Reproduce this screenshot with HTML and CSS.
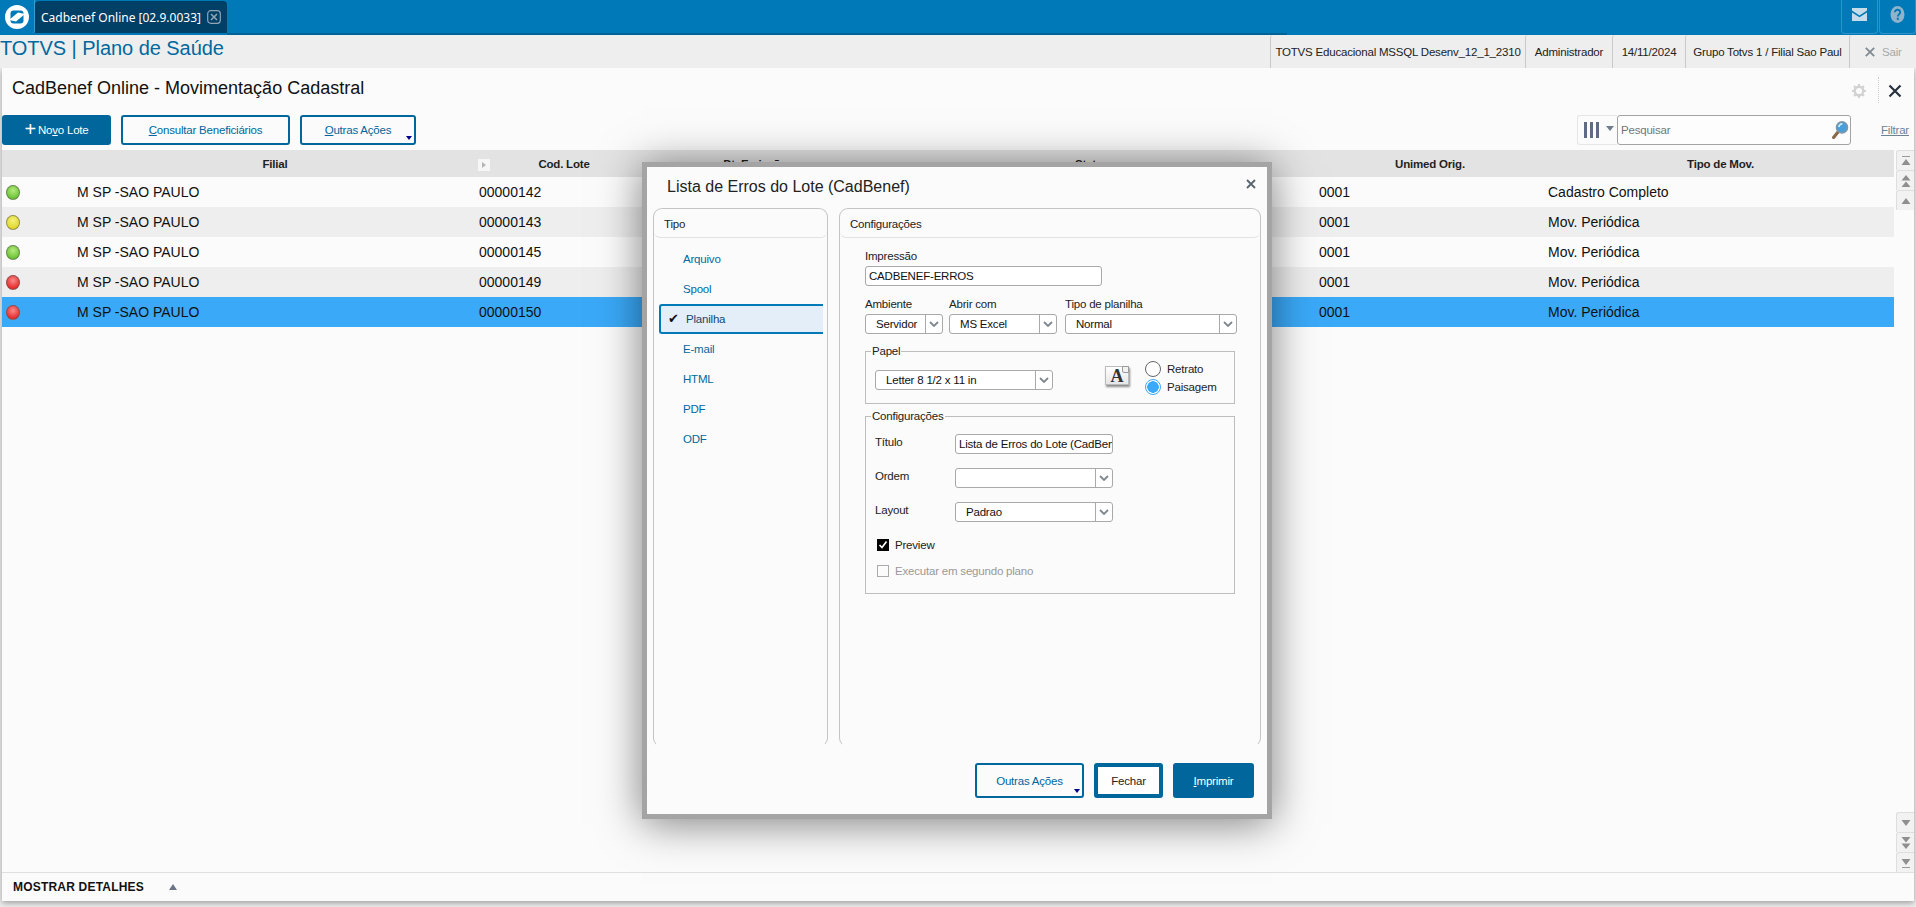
FILE: index.html
```html
<!DOCTYPE html>
<html lang="pt-BR">
<head>
<meta charset="utf-8">
<title>CadBenef Online</title>
<link rel="stylesheet" href="styles.css">
</head>
<body>
<header class="topbar">
  <div class="logo-cell">
    <svg width="30" height="30" viewBox="0 0 30 30"><circle cx="15" cy="15" r="12" fill="#fff"/><path d="M8.500 11.500Q8.500 8.500 11.500 8.500H18.500Q21.500 8.500 21.500 11.500V18.500Q21.500 21.500 18.500 21.500H11.500Q8.500 21.500 8.500 18.500Z" fill="#0079b8"/><path d="M7 18 16 10.600 23 12 14 19.400Z" fill="#fff"/></svg>
  </div>
  <div class="app-tab">
    <span>Cadbenef Online [02.9.0033]</span>
    <svg class="tab-close" width="14" height="14" viewBox="0 0 14 14"><rect x=".7" y=".7" width="12.6" height="12.6" rx="3" fill="none" stroke="#8fa6b6" stroke-width="1.2"/><path d="M4 4l6 6M10 4l-6 6" stroke="#8fa6b6" stroke-width="1.6"/></svg>
  </div>
  <div class="top-line"></div>
  <div class="top-icons">
    <div class="top-icon">
      <svg width="15" height="13" viewBox="0 0 15 13"><path d="M0 0h15v2.600L7.500 7.400 0 2.600Z" fill="#c5dcea"/><path d="M0 4.400l7.500 4.800L15 4.400V13H0Z" fill="#c5dcea"/></svg>
    </div>
    <div class="top-icon">
      <svg width="15" height="17" viewBox="0 0 15 17"><ellipse cx="7.500" cy="8.500" rx="7" ry="8.500" fill="#8fb3ca"/><path d="M4.800 6.300c0-3.400 5.400-3.400 5.400 0 0 2-2.400 2.200-2.400 4.200" fill="none" stroke="#0079b8" stroke-width="1.900"/><rect x="6.800" y="11.700" width="2" height="2.200" fill="#0079b8"/></svg>
    </div>
  </div>
</header>

<div class="subbar">
  <div class="brand">TOTVS | Plano de Saúde</div>
  <div class="info-cells">
    <div class="info-cell w-env">TOTVS Educacional MSSQL Desenv_12_1_2310</div>
    <div class="info-cell w-user">Administrador</div>
    <div class="info-cell w-date">14/11/2024</div>
    <div class="info-cell w-group">Grupo Totvs 1 / Filial Sao Paul</div>
    <div class="info-cell w-exit">
      <svg class="exit-x" width="10" height="10" viewBox="0 0 10 10"><path d="M.8.800l8.400 8.400M9.200.800.800 9.200" stroke="#7d8790" stroke-width="1.700"/></svg>
      <span class="exit-t">Sair</span>
    </div>
  </div>
</div>

<main class="main">
  <div class="title-row">
    <h1 class="page-title">CadBenef Online - Movimentação Cadastral</h1>
    <div class="title-tools">
      <svg class="gear" width="14" height="14" viewBox="0 0 14 14"><circle cx="7" cy="7" r="4.300" fill="none" stroke="#d2d2d2" stroke-width="2.400"/><path d="M7 0v3M7 11v3M0 7h3M11 7h3M2 2l2 2M10 10l2 2M12 2l-2 2M4 10l-2 2" stroke="#d2d2d2" stroke-width="2"/></svg>
      <span class="tool-sep"></span>
      <svg width="14" height="14" viewBox="0 0 14 14"><path d="M1.500 1.500l11 11M12.500 1.500l-11 11" stroke="#27323c" stroke-width="2.200"/></svg>
    </div>
  </div>

  <div class="toolbar">
    <button class="btn btn-fill btn-new"><span class="plus">+</span><span>No<u>v</u>o Lote</span></button>
    <button class="btn btn-line btn-cons"><u>C</u>onsultar Beneficiários</button>
    <button class="btn btn-line btn-other"><u>O</u>utras Ações<i class="caret"></i></button>
    <div class="search-group">
      <div class="col-btn">
        <span class="bars"><i></i><i></i><i></i></span>
        <i class="col-caret"></i>
      </div>
      <div class="search-box">
        <span>Pesquisar</span>
        <svg width="17" height="20" viewBox="0 0 17 20"><path d="M6 12 1.600 17.400" stroke="#8a6a4c" stroke-width="3.200" stroke-linecap="round"/><circle cx="10" cy="7.400" r="5.600" fill="#4a9fd8" stroke="#8296a8" stroke-width="1.400"/><path d="M6.800 7c.4-2 1.600-3 3.600-3.200" stroke="#d8eefa" stroke-width="1.600" fill="none"/></svg>
      </div>
    </div>
    <a class="filter-link">Filtrar</a>
  </div>

  <div class="grid-area">
    <section class="grid">
      <div class="g-row g-head">
        <div></div>
        <div class="h-filial">Filial<span class="sort-btn"><i></i></span></div>
        <div>Cod. Lote</div>
        <div>Dt. Emissão</div>
        <div class="h-status">Status</div>
        <div>Unimed Orig.</div>
        <div>Tipo de Mov.</div>
      </div>
      <div class="g-row g-body"><div><i class="dot green"></i></div><div>M SP -SAO PAULO</div><div class="p6">00000142</div><div></div><div></div><div class="p6">0001</div><div class="p1">Cadastro Completo</div></div>
      <div class="g-row g-body alt"><div><i class="dot yellow"></i></div><div>M SP -SAO PAULO</div><div class="p6">00000143</div><div></div><div></div><div class="p6">0001</div><div class="p1">Mov. Periódica</div></div>
      <div class="g-row g-body"><div><i class="dot green"></i></div><div>M SP -SAO PAULO</div><div class="p6">00000145</div><div></div><div></div><div class="p6">0001</div><div class="p1">Mov. Periódica</div></div>
      <div class="g-row g-body alt"><div><i class="dot red"></i></div><div>M SP -SAO PAULO</div><div class="p6">00000149</div><div></div><div></div><div class="p6">0001</div><div class="p1">Mov. Periódica</div></div>
      <div class="g-row g-body sel"><div><i class="dot red"></i></div><div>M SP -SAO PAULO</div><div class="p6">00000150</div><div></div><div></div><div class="p6">0001</div><div class="p1">Mov. Periódica</div></div>
    </section>
    <aside class="scroller">
      <div class="scroll-group">
        <div class="sb"><svg width="12" height="12" viewBox="0 0 12 12"><path d="M2 1.500h8" stroke="#9a9a9a"/><path d="M6 4l4.500 6h-9Z" fill="#8f8f8f"/></svg></div>
        <div class="sb"><svg width="12" height="14" viewBox="0 0 12 14"><path d="M6 1l4.500 5.500h-9ZM6 7.500l4.500 5.500h-9Z" fill="#8f8f8f"/></svg></div>
        <div class="sb"><svg width="12" height="10" viewBox="0 0 12 10"><path d="M6 2l4.500 6h-9Z" fill="#8f8f8f"/></svg></div>
      </div>
      <div class="scroll-group">
        <div class="sb"><svg width="12" height="10" viewBox="0 0 12 10"><path d="M6 8 1.500 2h9Z" fill="#8f8f8f"/></svg></div>
        <div class="sb"><svg width="12" height="14" viewBox="0 0 12 14"><path d="M6 6.500 1.500 1h9ZM6 13 1.500 7.500h9Z" fill="#8f8f8f"/></svg></div>
        <div class="sb"><svg width="12" height="12" viewBox="0 0 12 12"><path d="M6 8 1.500 2h9Z" fill="#8f8f8f"/><path d="M2 10.500h8" stroke="#9a9a9a"/></svg></div>
      </div>
    </aside>
  </div>

  <footer class="details">
    <strong>MOSTRAR DETALHES</strong>
    <i class="details-caret"></i>
  </footer>
</main>

<div class="dialog">
  <div class="dlg-head">
    <h2>Lista de Erros do Lote (CadBenef)</h2>
    <svg width="10" height="10" viewBox="0 0 10 10"><path d="M1 1l8 8M9 1l-8 8" stroke="#5c6670" stroke-width="1.900"/></svg>
  </div>
  <div class="dlg-body">
    <section class="panel panel-type">
      <div class="panel-head">Tipo</div>
      <ul class="type-list">
        <li>Arquivo</li>
        <li>Spool</li>
        <li class="active"><span class="tick">✔</span>Planilha</li>
        <li>E-mail</li>
        <li>HTML</li>
        <li>PDF</li>
        <li>ODF</li>
      </ul>
    </section>
    <section class="panel panel-conf">
      <div class="panel-head">Configurações</div>
      <div class="form">
        <label class="lbl">Impressão</label>
        <div class="input w-print">CADBENEF-ERROS</div>
        <div class="select-row">
          <div class="sel-col">
            <label class="lbl">Ambiente</label>
            <div class="select w-amb"><span class="val">Servidor</span><span class="arrow"><svg width="10" height="6" viewBox="0 0 10 6"><path d="M1 1l4 4 4-4" fill="none" stroke="#7f878e" stroke-width="1.800"/></svg></span></div>
          </div>
          <div class="sel-col">
            <label class="lbl">Abrir com</label>
            <div class="select w-abr"><span class="val">MS Excel</span><span class="arrow"><svg width="10" height="6" viewBox="0 0 10 6"><path d="M1 1l4 4 4-4" fill="none" stroke="#7f878e" stroke-width="1.800"/></svg></span></div>
          </div>
          <div class="sel-col">
            <label class="lbl">Tipo de planilha</label>
            <div class="select w-tipo"><span class="val">Normal</span><span class="arrow"><svg width="10" height="6" viewBox="0 0 10 6"><path d="M1 1l4 4 4-4" fill="none" stroke="#7f878e" stroke-width="1.800"/></svg></span></div>
          </div>
        </div>
        <fieldset class="fs fs-paper">
          <legend>Papel</legend>
          <div class="paper-row">
            <div class="select w-paper"><span class="val">Letter 8 1/2 x 11 in</span><span class="arrow"><svg width="10" height="6" viewBox="0 0 10 6"><path d="M1 1l4 4 4-4" fill="none" stroke="#7f878e" stroke-width="1.800"/></svg></span></div>
            <div class="page-icon">A</div>
            <div class="radios">
              <div class="radio-row"><i class="radio"></i>Retrato</div>
              <div class="radio-row"><i class="radio on"></i>Paisagem</div>
            </div>
          </div>
        </fieldset>
        <fieldset class="fs fs-conf">
          <legend>Configurações</legend>
          <div class="field-row"><label class="lbl f-lbl">Título</label><div class="input w-field clip">Lista de Erros do Lote (CadBenef)</div></div>
          <div class="field-row"><label class="lbl f-lbl">Ordem</label><div class="select w-field"><span class="val"></span><span class="arrow"><svg width="10" height="6" viewBox="0 0 10 6"><path d="M1 1l4 4 4-4" fill="none" stroke="#7f878e" stroke-width="1.800"/></svg></span></div></div>
          <div class="field-row"><label class="lbl f-lbl">Layout</label><div class="select w-field"><span class="val">Padrao</span><span class="arrow"><svg width="10" height="6" viewBox="0 0 10 6"><path d="M1 1l4 4 4-4" fill="none" stroke="#7f878e" stroke-width="1.800"/></svg></span></div></div>
          <div class="check-row first"><i class="check on"><svg width="12" height="12" viewBox="0 0 12 12"><path d="M2.500 6l2.500 2.500 4.500-6" fill="none" stroke="#fff" stroke-width="1.700"/></svg></i>Preview</div>
          <div class="check-row muted"><i class="check"></i>Executar em segundo plano</div>
        </fieldset>
      </div>
    </section>
  </div>
  <div class="dlg-foot">
    <button class="btn btn-line foot-other">Outras Ações<i class="caret"></i></button>
    <button class="btn foot-close">Fechar</button>
    <button class="btn btn-fill foot-print"><u>I</u>mprimir</button>
  </div>
</div>
</body>
</html>
```

FILE: styles.css
```css
* { box-sizing: border-box; }
html, body { margin: 0; height: 100%; }
body {
  width: 1916px;
  height: 907px;
  overflow: hidden;
  display: flex;
  flex-direction: column;
  background: #eeeeee;
  font-family: "Liberation Sans", Arial, sans-serif;
  font-size: 11.500px;
  letter-spacing: -.2px;
  color: #111;
}
i { display: block; font-style: normal; }
h1, h2 { margin: 0; font-weight: 400; letter-spacing: 0; }

/* top bar */
.topbar {
  flex: none;
  height: 35px;
  display: flex;
  background: #0079b8;
  position: relative;
  z-index: 2;
}
.logo-cell {
  width: 35px;
  height: 33px;
  display: flex;
  align-items: center;
  justify-content: center;
  border-right: 1px solid #3a9ccd;
  border-radius: 0 0 3px 0;
}
.app-tab {
  width: 192px;
  height: 32px;
  margin-top: 1px;
  padding-left: 6px;
  display: flex;
  align-items: center;
  gap: 6px;
  background: #003f66;
  border-radius: 4px 4px 0 0;
  color: #fff;
  font-family: "Noto Sans", sans-serif;
  font-size: 12px;
  letter-spacing: 0;
}
.tab-close { flex: none; }
.top-line {
  width: 1060px;
  height: 2px;
  margin-top: 33px;
  background: #006296;
}
.top-icons { margin-left: auto; display: flex; gap: 1px; }
.top-icon {
  width: 37px;
  height: 34px;
  display: flex;
  align-items: center;
  justify-content: center;
  padding-bottom: 4px;
  border: 1px solid #2e93c7;
  border-top: 0;
  border-radius: 0 0 4px 4px;
}

/* sub bar */
.subbar {
  flex: none;
  height: 33px;
  display: flex;
  justify-content: space-between;
  background: #eeeeee;
  position: relative;
  z-index: 1;
}
.brand {
  font-size: 20px;
  line-height: 27px;
  letter-spacing: -.05px;
  color: #00699f;
}
.info-cells { display: flex; color: #222; }
.info-cell {
  display: flex;
  align-items: center;
  justify-content: center;
  border-left: 1px solid #c9c9c9;
  border-radius: 3px 0 0 0;
  white-space: nowrap;
}
.w-env { width: 255px; }
.w-user { width: 87px; }
.w-date { width: 73px; }
.w-group { width: 164px; }
.w-exit { width: 67px; justify-content: flex-start; padding-left: 15px; gap: 7px; }
.exit-t { color: #a8a8a8; }

/* main */
.main {
  flex: none;
  width: 1912px;
  height: 833px;
  margin-left: 2px;
  display: flex;
  flex-direction: column;
  background: #fbfbfb;
  box-shadow: 0 2px 6px rgba(0, 0, 0, .35);
}
.title-row {
  flex: none;
  height: 47px;
  display: flex;
  justify-content: space-between;
  align-items: flex-start;
  padding: 10px 12px 0 10px;
}
.page-title { font-size: 18px; line-height: 20px; color: #111; }
.title-tools { display: flex; align-items: center; margin-top: 1px; }
.gear { margin-right: 12px; }
.tool-sep { width: 0; height: 26px; margin: -2px 9px 0 0; border-left: 1px dotted #ccc; }

.toolbar {
  flex: none;
  height: 30px;
  display: flex;
  align-items: stretch;
}
.btn {
  position: relative;
  padding: 0;
  border: 0;
  border-radius: 3px;
  font-family: inherit;
  font-size: 11.500px;
  letter-spacing: -.2px;
  background: transparent;
}
.btn-fill { background: #00669c; color: #fff; }
.btn-line { border: 2px solid #00669c; background: #fbfbfb; color: #00669c; }
.btn-new {
  width: 109px;
  display: flex;
  align-items: center;
  justify-content: center;
  gap: 2px;
}
.plus { font-size: 20px; line-height: 20px; font-weight: 400; margin-top: -2px; }
.btn-cons { width: 169px; margin-left: 10px; }
.btn-other { width: 116px; margin-left: 10px; }
.caret {
  position: absolute;
  right: 2px;
  bottom: 3px;
  width: 0;
  height: 0;
  border: 3.500px solid transparent;
  border-top: 4px solid #00008c;
  border-bottom: 0;
}
.search-group { display: flex; margin-left: auto; }
.col-btn {
  width: 40px;
  display: flex;
  align-items: center;
  gap: 7px;
  padding-left: 6px;
  border: 1px solid #e6e6e6;
  border-right: 0;
  border-radius: 3px 0 0 3px;
}
.bars { display: flex; gap: 3px; }
.bars i { width: 3px; height: 16px; background: #5f6b80; }
.col-caret {
  width: 0;
  height: 0;
  border: 4px solid transparent;
  border-top: 5px solid #727d8c;
  border-bottom: 0;
  margin-top: -4px;
}
.search-box {
  width: 234px;
  display: flex;
  align-items: center;
  justify-content: space-between;
  padding: 0 1px 0 3px;
  border: 1px solid #a3a3a3;
  border-radius: 3px;
  color: #757575;
  background: #fdfdfd;
}
.filter-link {
  width: 28px;
  margin: 0 5px 0 30px;
  line-height: 30px;
  color: #6d8396;
  text-decoration: underline;
}

/* grid */
.grid-area {
  flex: 1;
  min-height: 0;
  margin-top: 5px;
  display: flex;
  justify-content: space-between;
}
.grid { width: 1892px; }
.g-row {
  display: grid;
  grid-template-columns: 75px 396px 182px 200px 458px 234px 347px;
  align-items: center;
}
.g-head {
  height: 27px;
  background: #e3e3e3;
  font-weight: 700;
  text-align: center;
  color: #1f1f1f;
}
.h-filial { position: relative; }
.h-status { padding-left: 16px; }
.sort-btn {
  position: absolute;
  top: 1px;
  right: -17px;
  width: 12px;
  height: 12px;
  display: flex;
  align-items: center;
  justify-content: center;
  background: #f6f6f6;
}
.sort-btn i {
  width: 0;
  height: 0;
  border: 3.500px solid transparent;
  border-left: 4px solid #b5b5b5;
  border-right: 0;
}
.g-body {
  height: 30px;
  font-size: 14px;
  letter-spacing: 0;
  background: #fbfbfb;
}
.g-body.alt { background: #eeeeee; }
.g-body.sel { background: #3aa9f8; }
.p6 { padding-left: 6px; }
.p1 { padding-left: 1px; }
.dot {
  width: 14px;
  height: 15px;
  margin-left: 4px;
  border-radius: 50%;
  border: 1px solid rgba(90, 90, 90, .55);
}
.green { background: radial-gradient(circle at 50% 35%, #b4ea7e, #6cc234 75%, #5d9f33); }
.yellow { background: radial-gradient(circle at 50% 35%, #f4f17a, #e0d72c 75%, #ada735); }
.red { background: radial-gradient(circle at 50% 35%, #f98b8b, #e92f2f 70%, #b13a3a); }

.scroller {
  width: 18px;
  display: flex;
  flex-direction: column;
  justify-content: space-between;
}
.scroll-group { display: flex; flex-direction: column; }
.sb {
  width: 18px;
  height: 20px;
  display: flex;
  align-items: center;
  justify-content: center;
  background: #f2f2f2;
  border-left: 1px solid #dedede;
  border-top: 1px solid #dedede;
  border-radius: 3px 0 0 0;
}

.details {
  flex: none;
  height: 29px;
  display: flex;
  align-items: center;
  padding-left: 11px;
  border-top: 1px solid #e0e0e0;
}
.details strong { width: 156px; font-size: 12px; letter-spacing: .2px; }
.details-caret {
  width: 0;
  height: 0;
  border: 4px solid transparent;
  border-bottom: 6px solid #6c7587;
  border-top: 0;
}

/* dialog */
.dialog {
  position: absolute;
  left: 642px;
  top: 162px;
  width: 630px;
  height: 657px;
  z-index: 5;
  border: 5px solid #a4a4a4;
  background: #fbfbfb;
  box-shadow: 0 4px 40px rgba(0, 0, 0, .5);
}
.dlg-head {
  height: 41px;
  display: flex;
  align-items: flex-start;
  justify-content: space-between;
  padding: 11px 11px 0 20px;
}
.dlg-head h2 { font-size: 16px; line-height: 18px; color: #222; }
.dlg-head svg { margin-top: 1px; }
.dlg-body { display: flex; gap: 11px; padding-left: 6px; height: 539px; }
.panel {
  border: 1px solid #c4c4c4;
  border-bottom-color: transparent;
  border-radius: 9px;
  height: 100%;
}
.panel-type { width: 175px; }
.panel-conf { width: 422px; }
.panel-head {
  height: 29px;
  padding: 2px 0 0 10px;
  line-height: 27px;
  border-bottom: 1px solid #e2e2e2;
  border-radius: 0 0 6px 6px;
  color: #222;
}
.type-list { list-style: none; margin: 0; padding: 6px 0 0 5px; color: #00699f; }
.type-list li {
  width: 164px;
  height: 30px;
  padding-left: 22px;
  border: 2px solid transparent;
  border-right: 0;
  line-height: 26px;
  display: flex;
}
.type-list li.active {
  padding-left: 7px;
  background: #e3eef9;
  border-color: #0079b8;
  border-radius: 3px 0 0 3px;
  color: #19466a;
}
.tick { width: 18px; font-size: 13px; color: #111; }

.form { padding: 11px 0 0 25px; }
.lbl { display: block; line-height: 14px; color: #222; }
.input, .select {
  height: 20px;
  border: 1px solid #a9a9a9;
  border-radius: 3px;
  background: #fff;
  color: #111;
}
.input { margin-top: 3px; padding-left: 3px; line-height: 18px; }
.w-print { width: 237px; }
.select { margin-top: 3px; display: flex; }
.val { flex: 1; padding-left: 10px; line-height: 18px; overflow: hidden; white-space: nowrap; }
.arrow {
  flex: none;
  width: 17px;
  display: flex;
  align-items: center;
  justify-content: center;
  border-left: 1px solid #a9a9a9;
}
.select-row { display: flex; margin-top: 11px; }
.sel-col + .sel-col { margin-left: 6px; }
.sel-col:nth-child(3) { margin-left: 8px; }
.w-amb { width: 78px; }
.w-abr { width: 108px; }
.w-tipo { width: 172px; }

.fs {
  width: 370px;
  margin: 0;
  padding: 0 0 0 9px;
  border: 1px solid #bdbdbd;
  min-width: 0;
}
.fs legend { margin-left: -4px; padding: 0 1px; line-height: 14px; color: #222; }
.fs-paper { margin-top: 10px; padding-bottom: 8px; }
.paper-row { display: flex; padding-top: 3px; }
.w-paper { width: 178px; margin-top: 9px; }
.page-icon {
  position: relative;
  width: 24px;
  height: 19px;
  margin: 5px 0 0 52px;
  background: linear-gradient(#fff, #e6e6e6);
  border: 1px solid #bbb;
  box-shadow: 1px 2px 2px rgba(0, 0, 0, .45);
  font-family: "Liberation Serif", serif;
  font-weight: 700;
  font-size: 18px;
  line-height: 18px;
  text-align: center;
  color: #333;
}
.page-icon::after {
  content: "";
  position: absolute;
  top: -1px;
  right: -1px;
  width: 5px;
  height: 5px;
  background: #f2f2f2;
  border: 1px solid #999;
  border-radius: 0 0 0 2px;
}
.radios { margin-left: 16px; display: flex; flex-direction: column; gap: 2px; color: #222; }
.radio-row { display: flex; align-items: center; gap: 6px; height: 16px; }
.radio {
  width: 16px;
  height: 16px;
  border: 1px solid #666;
  border-radius: 50%;
  background: #fff;
}
.radio.on {
  border: 1px solid #3aa9f8;
  background: radial-gradient(circle, #3aa9f8 0 5.500px, #fff 6px);
}
.fs-conf { margin-top: 5px; padding-top: 11px; padding-bottom: 15px; }
.field-row { display: flex; align-items: center; margin-bottom: 14px; height: 20px; }
.f-lbl { width: 80px; padding-bottom: 4px; }
.w-field { width: 158px; margin-top: 0; }
.field-row .input.clip { padding-right: 3px; overflow: hidden; white-space: nowrap; }
.check-row { display: flex; align-items: center; gap: 6px; height: 14px; margin-left: 2px; color: #222; }
.check-row.first { margin-top: 16px; }
.check-row.muted { margin-top: 12px; color: #999; }
.check { width: 12px; height: 12px; border: 1px solid #aaa; background: #fbfbfb; }
.check.on { border: 0; background: #000; }
.check svg { display: block; }

.dlg-foot { display: flex; justify-content: flex-end; gap: 10px; padding: 16px 13px 0 0; }
.dlg-foot .btn { height: 35px; }
.foot-other { width: 109px; }
.foot-close { width: 69px; border: 4px solid #00669c; background: #fff; color: #222; }
.foot-print { width: 81px; }
```
